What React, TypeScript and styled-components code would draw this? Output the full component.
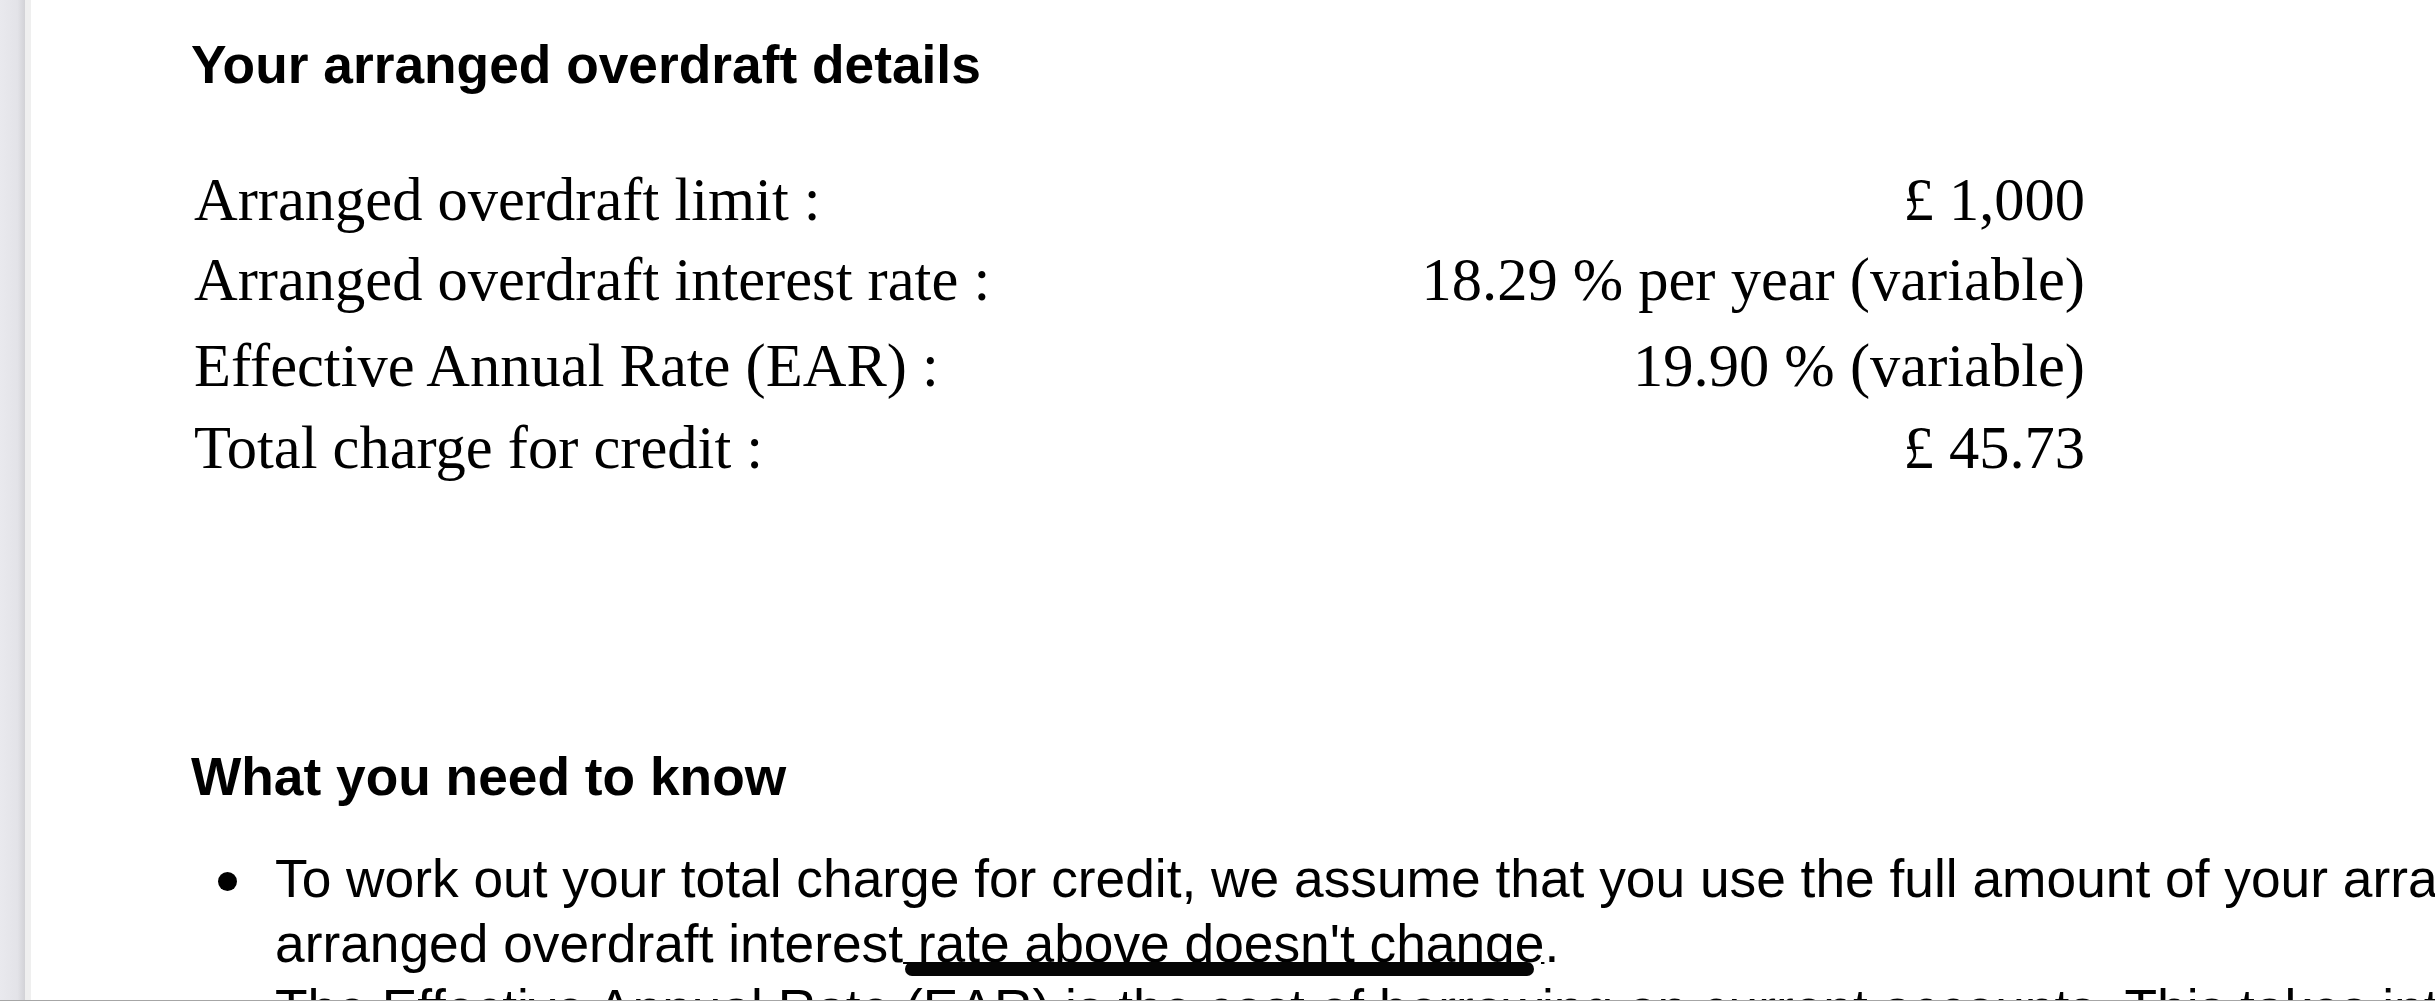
import React from 'react';
import styled, { createGlobalStyle } from 'styled-components';

const GlobalStyle = createGlobalStyle`
  html, body {
    margin: 0;
    padding: 0;
    background: #fff;
    overflow: hidden;
  }
`;

const Frame = styled.div`
  display: flex;
  width: 2435px;
  height: 1001px;
  box-sizing: border-box;
  border-bottom: 1px solid #a6a6a6;
  overflow: hidden;
  background: #fff;
`;

const Rail = styled.div`
  flex: 0 0 31px;
  box-sizing: border-box;
  background: linear-gradient(to right, #e9e9ee 0%, #e3e3e8 70%, #d2d2d6 100%);
  border-right: 6px solid #efefef;
`;

const Page = styled.main`
  flex: 1;
  min-width: 0;
  overflow: hidden;
  padding: 34px 0 0 160px;
  color: #000;
`;

const Heading = styled.h2<{ $before?: number; $after: number }>`
  margin: ${p => p.$before ?? 0}px 0 ${p => p.$after}px;
  font-family: 'Liberation Sans', Arial, Helvetica, sans-serif;
  font-weight: 700;
  font-size: 53.3px;
  line-height: 61px;
  white-space: nowrap;
`;

const Details = styled.div`
  display: flex;
  flex-direction: column;
  width: 1894px;
  box-sizing: border-box;
  padding-left: 3px;
  font-family: 'Liberation Serif', 'Times New Roman', serif;
  font-size: 60.5px;
  line-height: 77px;
`;

const Row = styled.div<{ $gap: number }>`
  display: flex;
  justify-content: space-between;
  margin-top: ${p => p.$gap}px;
  white-space: nowrap;
`;

const Notes = styled.ul`
  margin: 0;
  padding: 0;
  list-style: none;
  width: 2980px;
`;

const Note = styled.li`
  display: grid;
  grid-template-columns: 84px 1fr;
  font-family: 'Liberation Sans', Arial, Helvetica, sans-serif;
  font-size: 53.3px;
  line-height: 65px;
`;

const Bullet = styled.span`
  align-self: start;
  justify-self: start;
  width: 19px;
  height: 19px;
  margin: 26px 0 0 27px;
  border-radius: 50%;
  background: #000;
`;

const Marked = styled.span`
  position: relative;
  text-decoration: underline;
  text-decoration-thickness: 2px;
  text-underline-offset: 0px;

  &::after {
    content: '';
    position: absolute;
    left: 2px;
    right: 10px;
    bottom: -3px;
    height: 14px;
    border-radius: 7px;
    background: #050505;
  }
`;

const rows = [
  { label: 'Arranged overdraft limit :', value: '£ 1,000', gap: 0 },
  { label: 'Arranged overdraft interest rate :', value: '18.29 % per year (variable)', gap: 3 },
  { label: 'Effective Annual Rate (EAR) :', value: '19.90 % (variable)', gap: 9 },
  { label: 'Total charge for credit :', value: '£ 45.73', gap: 5 },
];

export default function App() {
  return (
    <>
      <GlobalStyle />
      <Frame>
        <Rail />
        <Page>
          <Heading $after={66}>Your arranged overdraft details</Heading>
          <Details>
            {rows.map(r => (
              <Row key={r.label} $gap={r.gap}>
                <span>{r.label}</span>
                <span>{r.value}</span>
              </Row>
            ))}
          </Details>

          <Heading $before={260} $after={39}>What you need to know</Heading>
          <Notes>
            <Note>
              <Bullet />
              <span>
                To work out your total charge for credit, we assume that you use the full amount of your
                arranged overdraft and that the arranged overdraft interest
                <Marked> rate above doesn't change</Marked>.
              </span>
            </Note>
            <Note>
              <Bullet />
              <span>
                The Effective Annual Rate (EAR) is the cost of borrowing on current accounts. This takes
                into account the interest rate, how often interest is charged and any other fees.
              </span>
            </Note>
          </Notes>
        </Page>
      </Frame>
    </>
  );
}
